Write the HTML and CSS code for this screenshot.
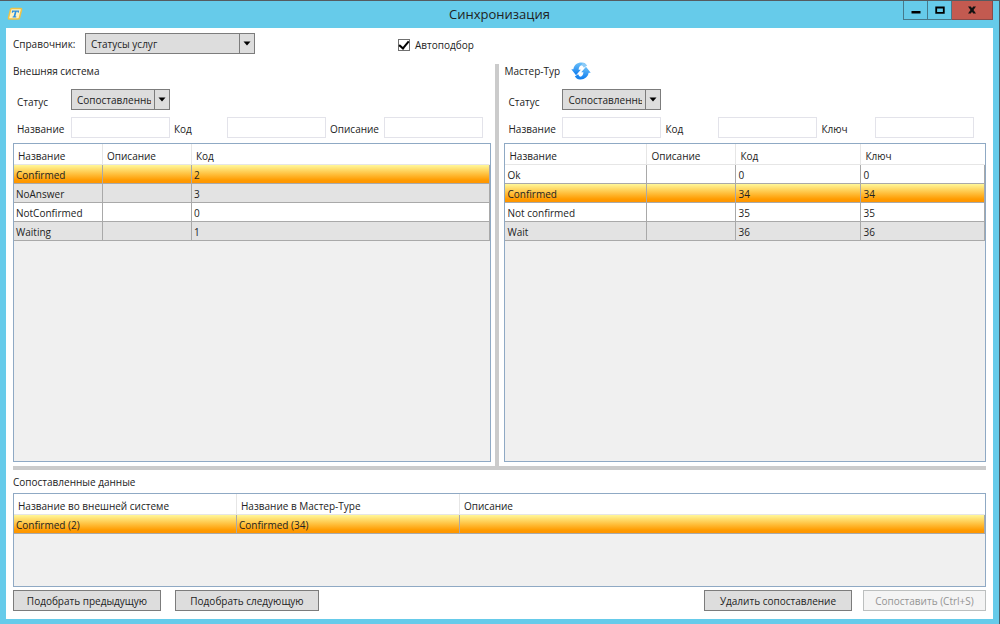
FILE: index.html
```html
<!DOCTYPE html>
<html lang="ru">
<head>
<meta charset="utf-8">
<title>Синхронизация</title>
<link rel="stylesheet" href="styles.css">
</head>
<body>
<div class="window">
  <header class="titlebar">
    <svg class="app-icon" width="16" height="14" viewBox="0 0 16 14" aria-hidden="true">
      <path d="M4.600 1.500h9q1.200 0 .9 1.200l-2 8q-.3 1.300-1.500 1.300H2.500q-1.300 0-1-1.200l2-8q.2-1.300 1.100-1.300z" fill="#fdf3c4" stroke="#eec247" stroke-width="1.500"/>
      <path d="M5 3.500h7.200l-.5 2.200h-.9l-.1-1H9.500L8.400 9.300l1 .2-.2.900H5.500l.2-.9.900-.2 1.200-4.600H6.600l-.9 1h-.9z" fill="#2b8fe0"/>
    </svg>
    <h1 class="title">Синхронизация</h1>
    <div class="window-buttons">
      <button class="window-button" type="button" aria-label="Свернуть"><svg width="10" height="10" viewBox="0 0 10 10"><path d="M.5 6h9v2.500h-9z" fill="#000"/></svg></button>
      <button class="window-button" type="button" aria-label="Развернуть"><svg width="10" height="10" viewBox="0 0 10 10"><path d="M1.200 2.500h7.600v5.300H1.200z" fill="none" stroke="#000" stroke-width="1.800"/></svg></button>
      <button class="window-button window-button-close" type="button" aria-label="Закрыть"><svg width="10" height="10" viewBox="0 0 10 10"><path d="M1 1.500h2.800L5 3.300l1.200-1.800H9L6.500 5 9 8.500H6.200L5 6.700 3.800 8.500H1L3.500 5z" fill="#111"/></svg></button>
    </div>
  </header>

  <main class="client">
    <div class="toolbar">
      <div class="directory">
        <label for="directory">Справочник:</label>
        <span class="combo combo-wide">
          <select id="directory"><option>Статусы услуг</option></select>
          <svg class="combo-arrow" width="8" height="5" viewBox="0 0 8 5" aria-hidden="true"><path d="M.5.5h7L4 4.500z" fill="#000"/></svg>
        </span>
      </div>
      <label class="check"><input type="checkbox" checked>Автоподбор</label>
    </div>

    <div class="panes">
      <section class="pane">
        <h2 class="pane-title">Внешняя система</h2>
        <div class="status">
          <label for="status-left">Статус</label>
          <span class="combo">
            <select id="status-left"><option>Сопоставленные</option></select>
            <svg class="combo-arrow" width="8" height="5" viewBox="0 0 8 5" aria-hidden="true"><path d="M.5.5h7L4 4.500z" fill="#000"/></svg>
          </span>
        </div>
        <div class="filters">
          <label for="name-left">Название</label><input id="name-left" type="text">
          <label for="code-left">Код</label><input id="code-left" type="text">
          <label for="desc-left">Описание</label><input id="desc-left" type="text">
        </div>
        <div class="grid-box">
          <table class="data">
            <colgroup><col class="col-s"><col class="col-s"><col></colgroup>
            <thead><tr><th>Название</th><th>Описание</th><th>Код</th></tr></thead>
            <tbody>
              <tr class="selected"><td>Confirmed</td><td></td><td>2</td></tr>
              <tr><td>NoAnswer</td><td></td><td>3</td></tr>
              <tr><td>NotConfirmed</td><td></td><td>0</td></tr>
              <tr><td>Waiting</td><td></td><td>1</td></tr>
            </tbody>
          </table>
        </div>
      </section>

      <div class="splitter"></div>

      <section class="pane">
        <h2 class="pane-title">Мастер-Тур
          <button class="refresh" type="button" aria-label="Обновить">
            <svg width="20" height="18" viewBox="0 0 20 18">
              <defs><linearGradient id="blue" x1="0" y1="0" x2="0" y2="1"><stop offset="0" stop-color="#6cc0f8"/><stop offset="1" stop-color="#0b7bf0"/></linearGradient></defs>
              <path d="M14.500 1.300C8.500-1 3 2 2.400 7.200H.3l4.700 6 4.800-5.400H7.600C7.700 5 9 3.200 11.300 3z" fill="url(#blue)"/>
              <path d="M5.500 16.700c6 2.300 11.500-.7 12.100-5.900h2.100l-4.700-6-4.800 5.400h2.200c-.1 2.800-1.400 4.600-3.700 4.800z" fill="url(#blue)"/>
              <path d="M11.800.8q3.200.4 4.400 2.700l-3.300 2.300q-.7-1.900-2.600-2.800z" fill="#8ccbf7"/>
              <path d="M8.200 17.200q-3.200-.4-4.400-2.700l3.300-2.300q.7 1.900 2.600 2.800z" fill="#1b86ee"/>
            </svg>
          </button>
        </h2>
        <div class="status">
          <label for="status-right">Статус</label>
          <span class="combo">
            <select id="status-right"><option>Сопоставленные</option></select>
            <svg class="combo-arrow" width="8" height="5" viewBox="0 0 8 5" aria-hidden="true"><path d="M.5.5h7L4 4.500z" fill="#000"/></svg>
          </span>
        </div>
        <div class="filters">
          <label for="name-right">Название</label><input id="name-right" type="text">
          <label for="code-right">Код</label><input id="code-right" type="text">
          <label for="key-right">Ключ</label><input id="key-right" type="text">
        </div>
        <div class="grid-box">
          <table class="data">
            <colgroup><col class="col-l"><col class="col-s"><col class="col-m"><col></colgroup>
            <thead><tr><th>Название</th><th>Описание</th><th>Код</th><th>Ключ</th></tr></thead>
            <tbody>
              <tr><td>Ok</td><td></td><td>0</td><td>0</td></tr>
              <tr class="selected"><td>Confirmed</td><td></td><td>34</td><td>34</td></tr>
              <tr><td>Not confirmed</td><td></td><td>35</td><td>35</td></tr>
              <tr><td>Wait</td><td></td><td>36</td><td>36</td></tr>
            </tbody>
          </table>
        </div>
      </section>
    </div>

    <div class="splitter splitter-row"></div>

    <section class="matched">
      <h2 class="matched-title">Сопоставленные данные</h2>
      <div class="grid-box matched-box">
        <table class="data">
          <colgroup><col class="col-xl"><col class="col-xl"><col></colgroup>
          <thead><tr><th>Название во внешней системе</th><th>Название в Мастер-Туре</th><th>Описание</th></tr></thead>
          <tbody><tr class="selected"><td>Confirmed (2)</td><td>Confirmed (34)</td><td></td></tr></tbody>
        </table>
      </div>
    </section>

    <footer class="actions">
      <div class="action-group action-group-pick">
        <button class="action action-wide" type="button">Подобрать предыдущую</button>
        <button class="action" type="button">Подобрать следующую</button>
      </div>
      <div class="action-group">
        <button class="action action-wide" type="button">Удалить сопоставление</button>
        <button class="action action-narrow" type="button" disabled>Сопоставить (Ctrl+S)</button>
      </div>
    </footer>
  </main>
</div>
</body>
</html>
```
FILE: styles.css
```css
* { box-sizing: border-box; }

body {
  margin: 0;
  color: #222;
  font: 10px/16px "Open Sans", "Noto Sans", sans-serif;
}

button, input, select {
  margin: 0;
  color: inherit;
  font: inherit;
}

h1, h2 { margin: 0; font-weight: 400; }

.window {
  display: flex;
  flex-direction: column;
  min-height: 100vh;
  padding: 0 6px 5px;
  border-top: 1px solid #555b60;
  border-right: 1px solid #47606b;
  background: #66cbea;
}

.titlebar {
  display: grid;
  grid-template-columns: 1fr auto 1fr;
  height: 27px;
}

.app-icon { margin: 6px 0 0 1px; }

.title {
  padding-top: 2px;
  font-size: 13px;
  line-height: 22px;
}

.window-buttons {
  display: flex;
  justify-self: end;
  height: 19px;
}

.window-button {
  display: flex;
  align-items: center;
  justify-content: center;
  width: 25px;
  padding: 0;
  border: 1px solid #46798b;
  border-top: 0;
  background: #66cbea;
}

.window-button + .window-button { width: 24px; border-left: 0; }

.window-button + .window-button-close {
  width: 41px;
  border-color: #8a4a48;
  background: #c35a50;
}

.client {
  display: flex;
  flex: 1;
  flex-direction: column;
  padding: 5px 7px 8px;
  background: #fff;
}

.toolbar {
  display: grid;
  grid-template-columns: 385px auto;
  align-items: start;
  height: 31px;
}

.directory {
  display: flex;
  align-items: center;
  justify-content: space-between;
  width: 242px;
}

.combo {
  display: grid;
  grid-template-columns: 1fr 15px;
  align-items: center;
  width: 99px;
  height: 21px;
  border: 1px solid #7c7c7c;
  background: #ddd;
}

.combo-wide { width: 170px; }

.combo select {
  grid-area: 1 / 1 / 2 / 3;
  width: 100%;
  height: 19px;
  padding: 0 18px 0 5px;
  border: 0;
  border-radius: 0;
  background: linear-gradient(#7c7c7c, #7c7c7c) right 14px top / 1px 100% no-repeat;
  appearance: none;
  text-overflow: clip;
}

.combo-arrow {
  grid-area: 1 / 2;
  justify-self: center;
  pointer-events: none;
}

.check {
  display: flex;
  align-items: center;
  gap: 5px;
  padding-top: 4px;
}

.check input {
  display: grid;
  place-items: center;
  width: 12px;
  height: 12px;
  border: 1px solid #707070;
  background: #fff;
  appearance: none;
}

.check input:checked::before {
  width: 4px;
  height: 8px;
  margin-top: -2px;
  border: solid #000;
  border-width: 0 2px 2px 0;
  content: "";
  transform: rotate(40deg);
}

.panes {
  display: grid;
  flex: 1;
  grid-template-columns: minmax(0, 478fr) 4px minmax(0, 482fr);
  column-gap: 4px;
}

.splitter { background: #cbcbcb; }
.splitter-row { height: 4px; }

.pane {
  display: flex;
  flex-direction: column;
  padding-bottom: 4px;
}

.splitter + .pane { padding-left: 1px; }

.pane-title {
  display: flex;
  align-items: center;
  gap: 11px;
  height: 14px;
  font-size: 10px;
}

.refresh {
  display: flex;
  padding: 0;
  border: 0;
  background: none;
}

.status {
  display: flex;
  align-items: center;
  margin-top: 11px;
}

.status label {
  width: 58px;
  padding: 4px 0 0 4px;
}

.filters {
  display: grid;
  grid-template-columns: 58px 99px 57px 99px 58px 99px;
  margin: 7px 0 5px;
}

.filters label { padding: 4px 0 0 4px; }

.filters input {
  height: 21px;
  padding: 0 4px;
  border: 1px solid #e3e3ea;
  background: #fff;
}

.grid-box {
  flex: 1;
  border: 1px solid #8fa9c4;
  background: #f0f0f0;
}

.data {
  width: 100%;
  border-spacing: 0;
  table-layout: fixed;
}

.col-s { width: 89px; }
.col-m { width: 125px; }
.col-l { width: 142px; }
.col-xl { width: 223px; }

.data th {
  height: 21px;
  padding: 3px 4px 0;
  border-right: 1px solid #e6e6e6;
  border-bottom: 1px solid #e6e6e6;
  background: #fff;
  font-weight: 400;
  text-align: left;
}

.data th:last-child { border-right-color: #fff; }

.data td {
  height: 19px;
  padding: 2px 2px 0;
  border-right: 1px solid #a9a9a9;
  border-bottom: 1px solid #a9a9a9;
  white-space: nowrap;
}

.data tr { background: #fff; }
.data tbody tr:nth-child(even) { background: #e3e3e3; }
.data tbody tr.selected { background: linear-gradient(#fff799, #ff9b00 80%, #ff9300); }

.matched-title {
  padding: 4px 0 3px;
  font-size: 10px;
}

.matched-box { height: 94px; }

.actions {
  display: flex;
  justify-content: space-between;
  margin-top: 3px;
}

.action-group {
  display: flex;
  gap: 11px;
}

.action-group-pick { gap: 14px; }

.action {
  width: 144px;
  height: 21px;
  padding: 0;
  border: 1px solid #7c7c7c;
  background: #ddd;
}

.action-wide { width: 148px; }
.action-narrow { width: 123px; }

.action:disabled {
  border-color: #bcbfbf;
  background: #f4f4f4;
  color: #939393;
}
```
